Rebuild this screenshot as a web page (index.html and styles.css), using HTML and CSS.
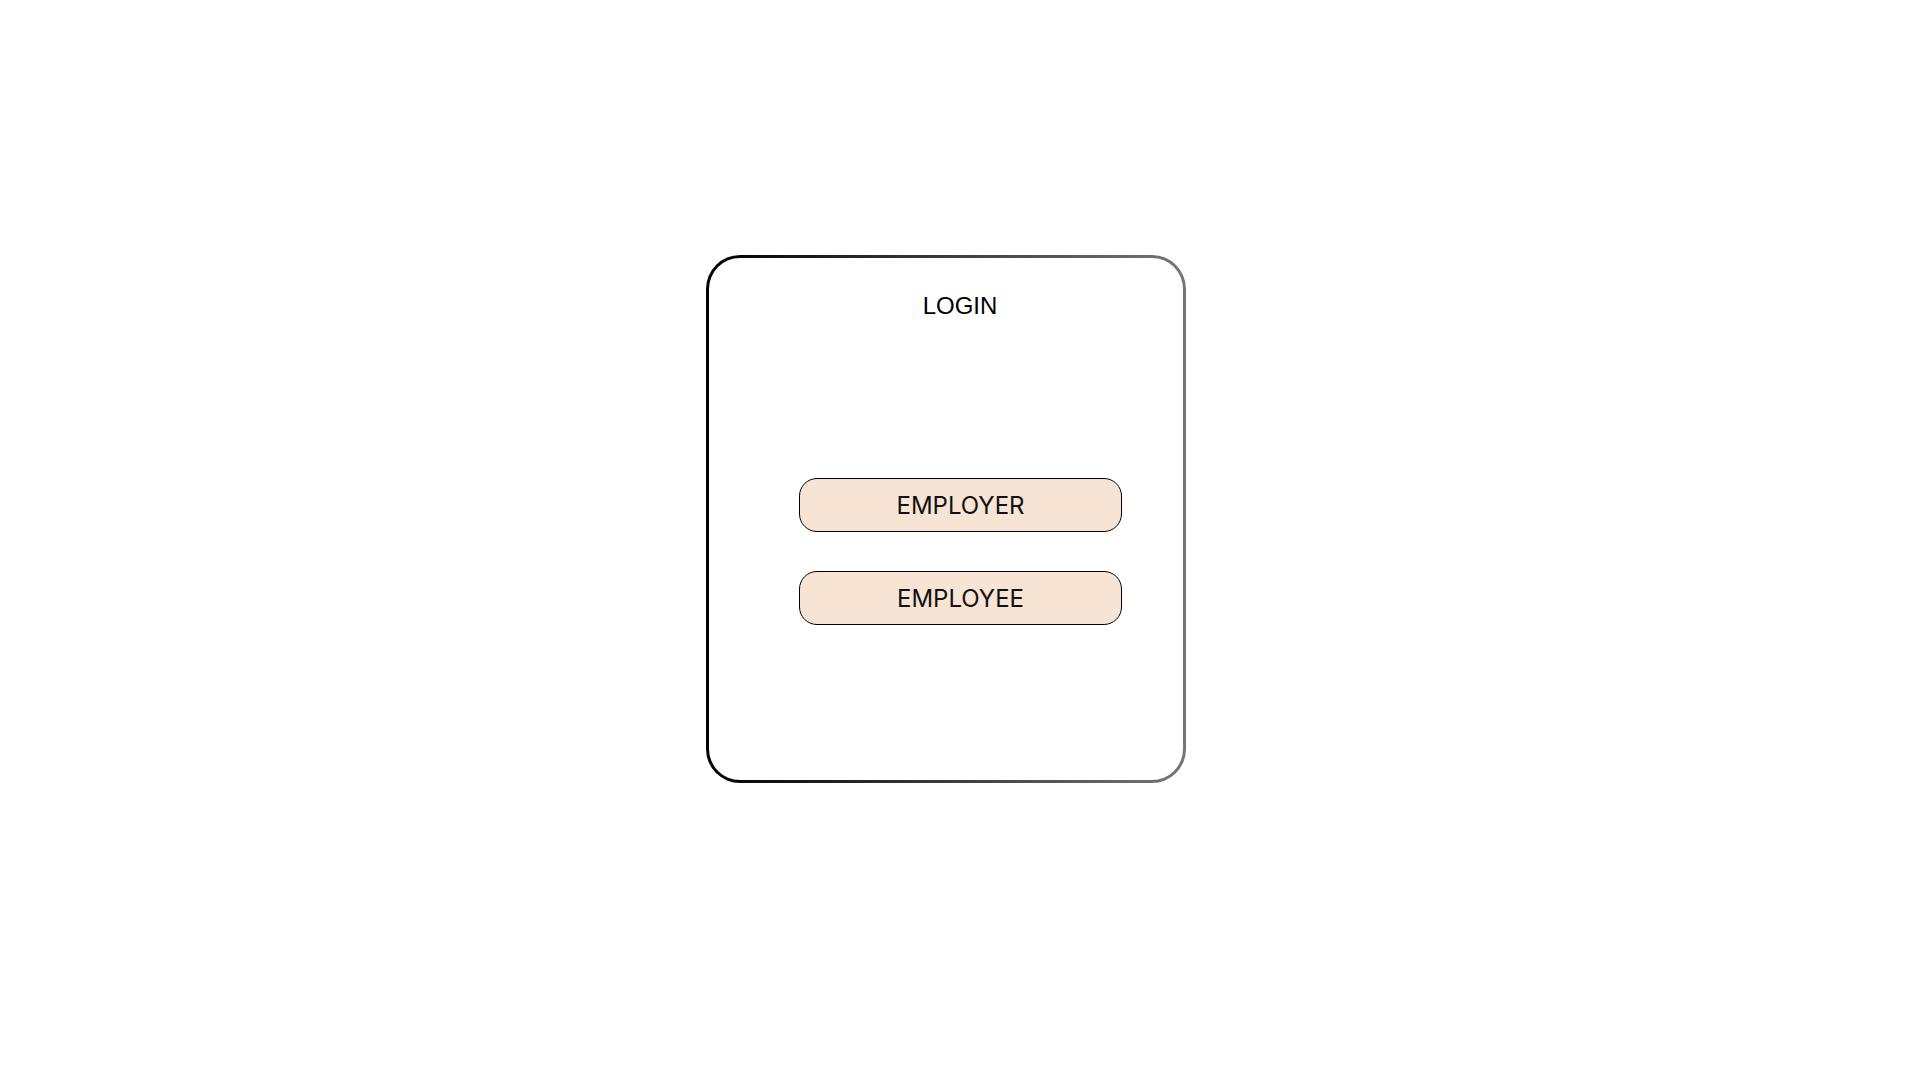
FILE: index.html
```html
<!DOCTYPE html>
<html>
<head>
  <link rel="stylesheet" href="styles.css">
</head>
<body>

  <section class="login-card">
    <h1 class="login-title">LOGIN</h1>
    <div class="login-options">
      <button class="role-btn">EMPLOYER</button>
      <button class="role-btn">EMPLOYEE</button>
    </div>
  </section>

</body>
</html>
```

FILE: styles.css
```css
* {
  box-sizing: border-box;
  margin: 0;
  padding: 0;
}

body {
  background-color: white;
  font-family: "Inter", sans-serif;
}

/* card with a black to grey border */
.login-card {
  width: 480px;
  height: 528px;
  margin: 255px 0 0 706px;
  padding: 34px 62px 0 90px;
  border: 3px solid transparent;
  border-radius: 34px;
  background:
    linear-gradient(white, white) padding-box,
    linear-gradient(to right, #000000, #777777) border-box;
  display: flex;
  flex-direction: column;
  align-items: center;
}

.login-title {
  font-family: "Liberation Sans", Arial, sans-serif;
  font-size: 24px;
  font-weight: 400;
  line-height: normal;
  color: #000;
}

.login-options {
  width: 100%;
  margin-top: 158px;
  display: flex;
  flex-direction: column;
  gap: 39px;
}

.role-btn {
  width: 323px;
  height: 54px;
  background-color: #f7e4d5;
  border: 1px solid #000;
  border-radius: 18px;
  font-family: "Inter", sans-serif;
  font-size: 24px;
  font-weight: 400;
  color: #111;
  display: flex;
  justify-content: center;
  align-items: center;
}
```
